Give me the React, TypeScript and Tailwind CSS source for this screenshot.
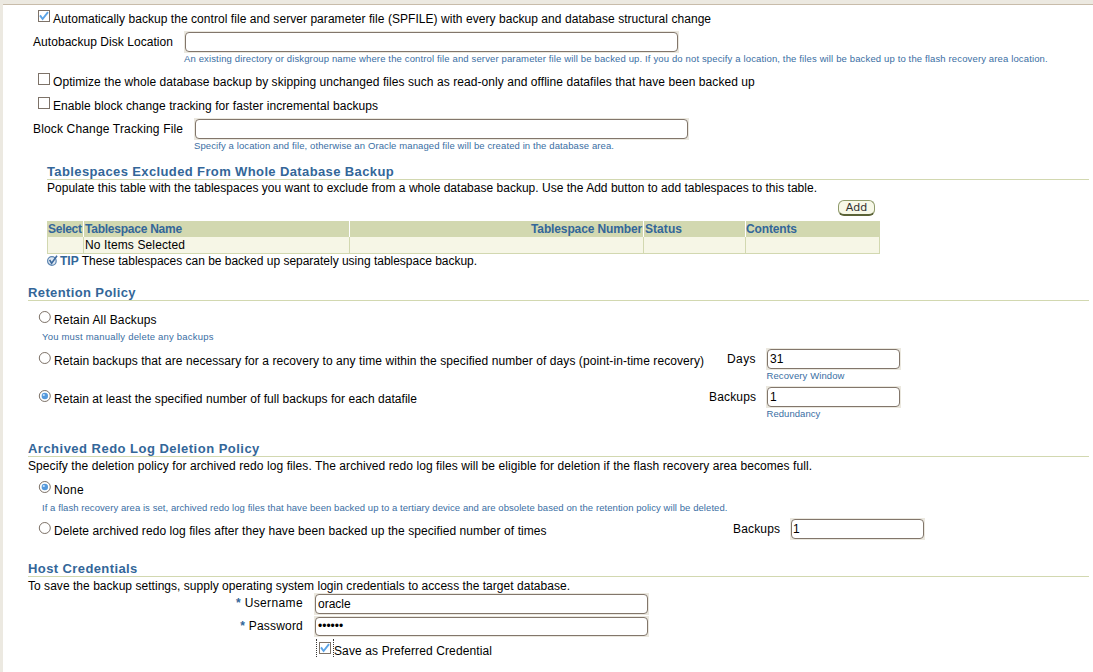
import type { ReactNode } from "react";

function Checkbox({ checked = false, className = "" }: { checked?: boolean; className?: string }) {
  return (
    <svg className={`size-[12px] shrink-0 ${className}`} viewBox="0 0 12 12" role="checkbox" aria-checked={checked}>
      <rect x="0.5" y="0.5" width="11" height="11" fill="#fff" stroke="#7d7268" />
      {checked && <path d="M2 5.4 L4.6 9 L10 2.2" fill="none" stroke="#5ba3e6" strokeWidth="1.9" />}
    </svg>
  );
}

function Radio({ checked = false, className = "" }: { checked?: boolean; className?: string }) {
  return (
    <svg className={`size-[13px] shrink-0 ${className}`} viewBox="0 0 13 13" role="radio" aria-checked={checked}>
      <circle cx="6.8" cy="6" r="5.5" fill="#fff" stroke="#7d7268" />
      {checked && (
        <>
          <circle cx="6.8" cy="6" r="3.2" fill="#5499dc" />
          <circle cx="5.8" cy="5" r="1.1" fill="#cfe4f8" />
        </>
      )}
    </svg>
  );
}

function Field({ className, value = "", type = "text" }: { className: string; value?: string; type?: string }) {
  return (
    <div className={`shrink-0 bg-[#ebe8df] p-px ${className}`}>
      <input
        type={type}
        defaultValue={value}
        className="block h-full w-full rounded-[4px] border border-[#82766b] bg-white px-[2px] text-[12px] leading-[16px] text-black outline-none"
      />
    </div>
  );
}

function Hint({ className, children }: { className: string; children: ReactNode }) {
  return <div className={`text-[9.5px] leading-[12px] text-[#3a6ea3] ${className}`}>{children}</div>;
}

function Heading({ className, children }: { className: string; children: ReactNode }) {
  return (
    <h2 className={`mr-[4px] h-[17px] border-b border-[#d2d8b0] text-[13px] leading-[17px] font-bold text-[#336699] ${className}`}>
      {children}
    </h2>
  );
}

export default function App() {
  return (
    <div className="h-[672px] w-[1093px] overflow-hidden border-t-[4px] border-[#ece9e1] bg-[#ece9e1] font-['Liberation_Sans',Arial,sans-serif] text-[12px] leading-[16px] whitespace-nowrap text-black">
      <div className="ml-[3px] flex h-full flex-col border-t border-[#c8bcaa] bg-white">
        <div className="flex h-[26px] items-start pl-[35px]">
          <Checkbox checked className="mt-[5px]" />
          <span className="mt-[6px] ml-[3px] tracking-[0.053px]">
            Automatically backup the control file and server parameter file (SPFILE) with every backup and database structural change
          </span>
        </div>
        <div className="flex h-[22px] items-start pl-[30px]">
          <span className="mt-[3px] w-[151px] tracking-[0.054px]">Autobackup Disk Location</span>
          <Field className="h-[22px] w-[495px]" />
        </div>
        <Hint className="h-[19px] pl-[181px] tracking-[0.138px]">
          An existing directory or diskgroup name where the control file and server parameter file will be backed up. If you do not specify a location, the files will be backed up to the flash recovery area location.
        </Hint>
        <div className="flex h-[24px] items-start pl-[35px]">
          <Checkbox className="mt-[1px]" />
          <span className="mt-[2px] ml-[3px] tracking-[0.065px]">
            Optimize the whole database backup by skipping unchanged files such as read-only and offline datafiles that have been backed up
          </span>
        </div>
        <div className="flex h-[22px] items-start pl-[35px]">
          <Checkbox className="mt-[1px]" />
          <span className="mt-[2px] ml-[3px] tracking-[0.072px]">Enable block change tracking for faster incremental backups</span>
        </div>
        <div className="flex h-[22px] items-start pl-[30px]">
          <span className="mt-[3px] w-[161px] tracking-[0.157px]">Block Change Tracking File</span>
          <Field className="h-[22px] w-[495px]" />
        </div>
        <Hint className="h-[23px] pl-[191px] tracking-[0.104px]">
          Specify a location and file, otherwise an Oracle managed file will be created in the database area.
        </Hint>

        <section className="pl-[44px]">
          <Heading className="tracking-[0.38px]">Tablespaces Excluded From Whole Database Backup</Heading>
          <p className="h-[16px] tracking-[0.015px]">
            Populate this table with the tablespaces you want to exclude from a whole database backup. Use the Add button to add tablespaces to this table.
          </p>
          <div className="flex h-[25px] w-[828px] justify-end pt-[4px]">
            <button className="h-[16px] w-[37px] rounded-[6px] border border-b-2 border-[#8f9a6b] border-b-[#5a6236] bg-[#f7f8e8] font-['DejaVu_Sans',sans-serif] text-[11px] leading-[14px] text-[#333]">
              Add
            </button>
          </div>
          <div className="w-[833px] border-b border-[#d2d8b0]">
            <div className="grid h-[16px] grid-cols-[36px_1px_265px_1px_293px_1px_101px_1px_134px] bg-[#d2d8b0] font-bold text-[#336699]">
              <span className="pl-[1px] tracking-[-0.27px]">Select</span>
              <i className="bg-white" />
              <span className="pl-[1px] tracking-[-0.24px]">Tablespace Name</span>
              <i className="bg-white" />
              <span className="pr-[1px] text-right tracking-[-0.13px]">Tablespace Number</span>
              <i className="bg-white" />
              <span className="pl-[1px] tracking-[0.06px]">Status</span>
              <i className="bg-white" />
              <span className="tracking-[-0.14px]">Contents</span>
            </div>
            <div className="grid h-[16px] grid-cols-[36px_1px_265px_1px_293px_1px_101px_1px_134px] bg-[#f6f6e6]">
              <span className="border-l border-[#d2d8b0]" />
              <i className="bg-[#d2d8b0]" />
              <span className="pl-[1px] tracking-[0.12px]">No Items Selected</span>
              <i className="bg-[#d2d8b0]" />
              <span />
              <i className="bg-[#d2d8b0]" />
              <span />
              <i className="bg-[#d2d8b0]" />
              <span className="border-r border-[#d2d8b0]" />
            </div>
          </div>
          <div className="flex h-[30px] items-start leading-[14px]">
            <svg className="mt-[1px] size-[11px]" viewBox="0 0 11 11">
              <circle cx="4.9" cy="6" r="4.3" fill="#dfe8f2" stroke="#5b84b0" strokeWidth="1.2" />
              <path d="M2.6 4.8 L4.6 8.2 L10 0.8" fill="none" stroke="#3c6a9e" strokeWidth="1.6" />
            </svg>
            <b className="ml-[2px] text-[#336699]">TIP</b>
            <span className="ml-[3px] tracking-[-0.012px]">These tablespaces can be backed up separately using tablespace backup.</span>
          </div>
        </section>

        <Heading className="ml-[25px] tracking-[0.38px]">Retention Policy</Heading>
        <div className="flex h-[30px] items-start pl-[35px]">
          <Radio className="mt-[10px]" />
          <span className="mt-[11px] ml-[3px] tracking-[0.15px]">Retain All Backups</span>
        </div>
        <Hint className="h-[17px] pl-[39px] tracking-[0.2px]">You must manually delete any backups</Hint>
        <div className="flex h-[22px] items-start pl-[35px]">
          <Radio className="mt-[4px]" />
          <span className="mt-[5px] ml-[3px] w-[673px] tracking-[0.075px]">
            Retain backups that are necessary for a recovery to any time within the specified number of days (point-in-time recovery)
          </span>
          <span className="mt-[3px] w-[39px] tracking-[0.4px]">Days</span>
          <Field value="31" className="h-[22px] w-[135px]" />
        </div>
        <Hint className="h-[16px] pl-[763.5px] tracking-[0.1px]">Recovery Window</Hint>
        <div className="flex h-[22px] items-start pl-[35px]">
          <Radio checked className="mt-[4px]" />
          <span className="mt-[5px] ml-[3px] w-[655px] tracking-[0.04px]">
            Retain at least the specified number of full backups for each datafile
          </span>
          <span className="mt-[3px] w-[57px] tracking-[0.16px]">Backups</span>
          <Field value="1" className="h-[22px] w-[135px]" />
        </div>
        <Hint className="h-[32px] pl-[763.5px] tracking-[0.05px]">Redundancy</Hint>

        <Heading className="ml-[25px] tracking-[0.48px]">Archived Redo Log Deletion Policy</Heading>
        <p className="h-[21px] pt-px pl-[25px] tracking-[0.077px]">
          Specify the deletion policy for archived redo log files. The archived redo log files will be eligible for deletion if the flash recovery area becomes full.
        </p>
        <div className="flex h-[24px] items-start pl-[35px]">
          <Radio checked className="mt-[3px]" />
          <span className="mt-[4px] ml-[3px] tracking-[0.3px]">None</span>
        </div>
        <Hint className="h-[16px] pl-[39px] tracking-[0.067px]">
          If a flash recovery area is set, archived redo log files that have been backed up to a tertiary device and are obsolete based on the retention policy will be deleted.
        </Hint>
        <div className="flex h-[22px] items-start pl-[35px]">
          <Radio className="mt-[4px]" />
          <span className="mt-[5px] ml-[3px] w-[679px] tracking-[0.07px]">
            Delete archived redo log files after they have been backed up the specified number of times
          </span>
          <span className="mt-[3px] w-[57px] tracking-[0.16px]">Backups</span>
          <Field value="1" className="h-[22px] w-[135px] [&>input]:pl-px" />
        </div>

        <Heading className="mt-[20px] ml-[25px] tracking-[0.4px]">Host Credentials</Heading>
        <p className="h-[16px] pt-px pl-[25px] tracking-[0.037px]">
          To save the backup settings, supply operating system login credentials to access the target database.
        </p>
        <div className="flex h-[23px] items-start">
          <span className="mt-[2px] mr-[11px] w-[300px] text-right tracking-[0.37px]">
            <b className="text-[#336699]">*</b> Username
          </span>
          <Field value="oracle" className="h-[22px] w-[335px]" />
        </div>
        <div className="flex h-[21px] items-start">
          <span className="mt-[2px] mr-[11px] w-[300px] text-right tracking-[0.2px]">
            <b className="text-[#336699]">*</b> Password
          </span>
          <Field type="password" value="oracle" className="h-[21px] w-[335px] [&>input]:pb-[2px]" />
        </div>
        <div className="flex items-start pl-[313px]">
          <span className="mt-[2px] h-[18px] w-[18px] border-x border-dotted border-[#333] pt-[3px] pl-[2px]">
            <Checkbox checked />
          </span>
          <span className="mt-[6px] tracking-[0.12px]">Save as Preferred Credential</span>
        </div>
      </div>
    </div>
  );
}
